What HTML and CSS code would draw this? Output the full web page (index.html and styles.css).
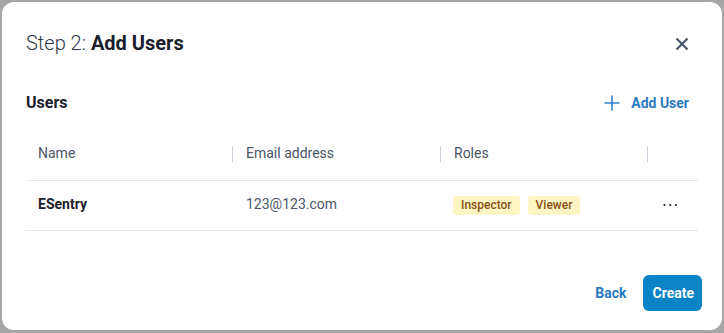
FILE: index.html
```html
<!DOCTYPE html>
<html lang="en">
<head>
<meta charset="utf-8">
<title>Step 2: Add Users</title>
<link rel="stylesheet" href="styles.css">
</head>
<body>
<div class="dialog">
  <header class="dialog-header">
    <h1 class="title"><span class="title-step">Step 2:</span> <span class="title-main">Add Users</span></h1>
    <button class="close-btn" aria-label="Close">
      <svg width="14" height="14" viewBox="0 0 14 14"><path d="M1.5 1.5L12.5 12.5M12.5 1.5L1.5 12.5" stroke="#4a5568" stroke-width="2.1" stroke-linecap="butt" fill="none"/></svg>
    </button>
  </header>
  <section class="users">
    <div class="users-head">
      <h2 class="users-title">Users</h2>
      <button class="add-user">
        <svg width="16" height="16" viewBox="0 0 16 16"><path d="M8 0.5V15.5M0.5 8H15.5" stroke="#3182ce" stroke-width="1.6" fill="none"/></svg>
        <span>Add User</span>
      </button>
    </div>
    <div class="table">
      <div class="row head-row">
        <div class="cell first">Name</div>
        <div class="cell sep">Email address</div>
        <div class="cell sep">Roles</div>
        <div class="cell sep"></div>
      </div>
      <div class="row body-row">
        <div class="cell first name">ESentry</div>
        <div class="cell email">123@123.com</div>
        <div class="cell roles"><span class="badge">Inspector</span><span class="badge">Viewer</span></div>
        <div class="cell actions">
          <svg width="16" height="4" viewBox="0 0 16 4"><circle cx="1.5" cy="2" r="1.1" fill="#1a202c"/><circle cx="7.3" cy="2" r="1.1" fill="#1a202c"/><circle cx="12.8" cy="2" r="1.1" fill="#1a202c"/></svg>
        </div>
      </div>
    </div>
  </section>
  <footer class="dialog-footer">
    <button class="btn-back">Back</button>
    <button class="btn-create">Create</button>
  </footer>
</div>
</body>
</html>
```
FILE: styles.css
```css
* { box-sizing: border-box; }
html, body { margin: 0; padding: 0; }
body {
  background: #a6a6a6;
  font-family: Roboto, "Liberation Sans", Arial, sans-serif;
  color: #1a202c;
  width: 724px;
  height: 333px;
  overflow: hidden;
}
button {
  font-family: inherit;
  border: 0;
  background: none;
  padding: 0;
  margin: 0;
  cursor: pointer;
}
h1, h2 { margin: 0; }

.dialog {
  margin: 2px 0 0 2px;
  width: 720px;
  height: 328px;
  background: #fff;
  border-radius: 12px;
  padding: 27px 24px 0 24px;
}

.dialog-header {
  display: flex;
  align-items: center;
  justify-content: space-between;
  height: 28px;
}
.title {
  font-size: 20px;
  line-height: 28px;
  font-weight: 400;
  color: #1a202c;
}
.title-step { font-weight: 300; color: #2d3748; }
.title-main { font-weight: 700; }
.close-btn {
  width: 32px;
  height: 32px;
  display: flex;
  align-items: center;
  justify-content: center;
  margin-top: 2px;
}
.close-btn svg { display: block; }

.users { margin-top: 34px; }
.users-head {
  display: flex;
  align-items: center;
  justify-content: space-between;
  height: 24px;
}
.users-title {
  font-size: 16px;
  line-height: 24px;
  font-weight: 700;
  color: #1a202c;
}
.add-user {
  display: flex;
  align-items: center;
  gap: 11px;
  color: #2b7bc3;
  font-size: 14px;
  font-weight: 700;
  line-height: 24px;
  padding-right: 9px;
}
.add-user svg { display: block; }

.table { margin-top: 13px; }
.row {
  display: grid;
  grid-template-columns: 206px 208px 207px 1fr;
  border-bottom: 1px solid #e2e8f0;
}
.head-row { height: 53px; padding-bottom: 3px; }
.body-row { height: 50px; }
.cell {
  display: flex;
  align-items: center;
  font-size: 14px;
  line-height: 20px;
  padding-left: 14px;
  position: relative;
}
.cell.first { padding-left: 12px; }
.head-row .cell { color: #4a5568; }
.head-row .cell.sep::before {
  content: "";
  position: absolute;
  left: 0;
  top: 50%;
  width: 1px;
  height: 16px;
  margin-top: -7px;
  background: #cbd5e0;
}
.name { font-weight: 700; color: #1a202c; padding-bottom: 3px; }
.email { color: #4a5568; padding-bottom: 3px; }
.roles { gap: 8px; padding-left: 13px; padding-bottom: 1px; }
.badge {
  display: inline-block;
  background: #fdf5c2;
  color: #8a5216;
  font-size: 12px;
  font-weight: 500;
  line-height: 19px;
  padding: 0 8px;
  border-radius: 4px;
}
.actions { padding-left: 16px; padding-bottom: 1px; }
.actions svg { display: block; }

.dialog-footer {
  display: flex;
  justify-content: flex-end;
  align-items: center;
  margin-top: 44px;
  margin-right: -4px;
}
.btn-back {
  height: 36px;
  padding: 0 17px 0 16px;
  color: #2b7bc3;
  font-size: 14px;
  font-weight: 700;
}
.btn-create {
  height: 36px;
  padding: 0 8px 0 9px;
  background: #0a84c6;
  color: #fff;
  font-size: 14px;
  font-weight: 700;
  border-radius: 6px;
}
```
